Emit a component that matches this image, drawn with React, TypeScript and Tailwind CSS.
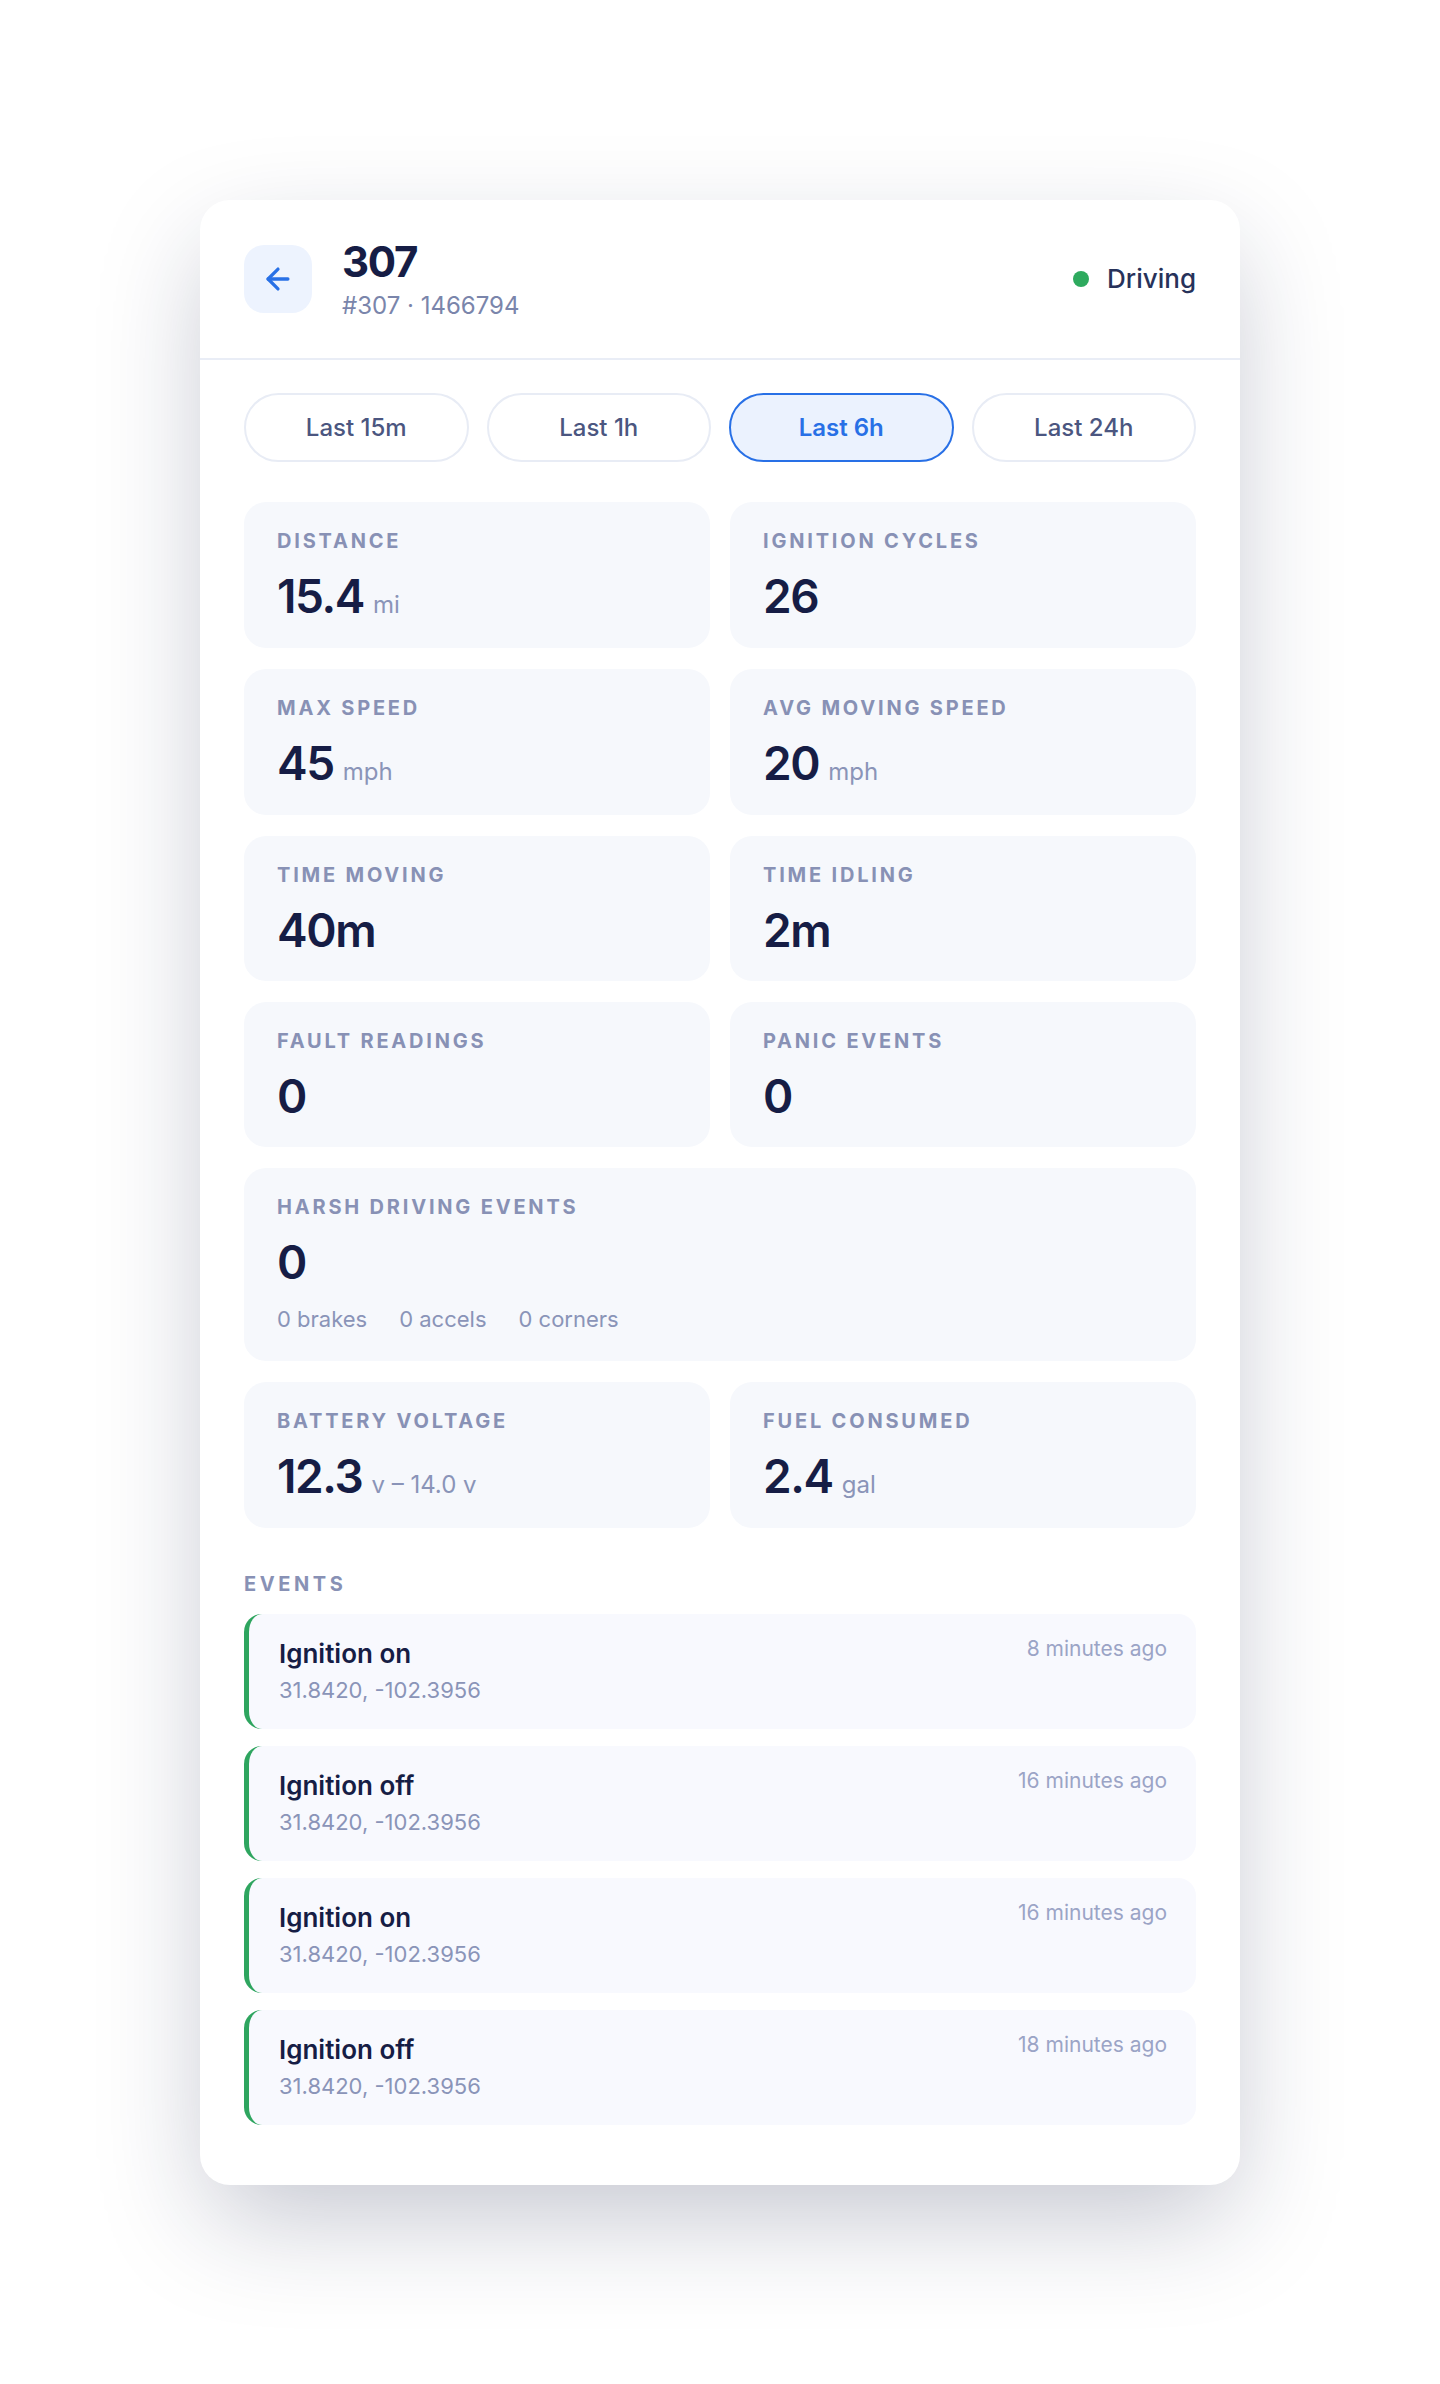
import { ArrowLeft } from "lucide-react";

type Stat = {
  label: string;
  value: string;
  unit?: string;
  wide?: boolean;
  extra?: string[];
};

const stats: Stat[] = [
  { label: "Distance", value: "15.4", unit: "mi" },
  { label: "Ignition cycles", value: "26" },
  { label: "Max speed", value: "45", unit: "mph" },
  { label: "Avg moving speed", value: "20", unit: "mph" },
  { label: "Time moving", value: "40m" },
  { label: "Time idling", value: "2m" },
  { label: "Fault readings", value: "0" },
  { label: "Panic events", value: "0" },
  { label: "Harsh driving events", value: "0", wide: true, extra: ["0 brakes", "0 accels", "0 corners"] },
  { label: "Battery voltage", value: "12.3", unit: "v – 14.0 v" },
  { label: "Fuel consumed", value: "2.4", unit: "gal" },
];

const events = [
  { title: "Ignition on", at: "8 minutes ago" },
  { title: "Ignition off", at: "16 minutes ago" },
  { title: "Ignition on", at: "16 minutes ago" },
  { title: "Ignition off", at: "18 minutes ago" },
];

const ranges = ["Last 15m", "Last 1h", "Last 6h", "Last 24h"];

const StatCard = ({ stat }: { stat: Stat }) => (
  <div
    className={`rounded-[22px] bg-[#f6f8fc] px-[33px] pt-[25px] ${
      stat.wide ? "col-span-2 pb-[27px]" : "pb-[28px]"
    }`}
  >
    <div className="text-[20px] leading-[28px] font-bold uppercase tracking-[0.14em] text-[#8891b5]">
      {stat.label}
    </div>
    <div className="mt-[18px] flex items-baseline">
      <span className="text-[46px] leading-[46px] font-semibold tracking-[-0.03em] text-[#161d45]">
        {stat.value}
      </span>
      {stat.unit && <span className="ml-[9px] text-[24px] leading-[30px] text-[#8a94b8]">{stat.unit}</span>}
    </div>
    {stat.extra && (
      <div className="mt-[19px] flex gap-8 text-[22px] leading-[30px] text-[#8a94b8]">
        {stat.extra.map((e) => (
          <span key={e}>{e}</span>
        ))}
      </div>
    )}
  </div>
);

const App = () => {
  return (
    <div className="min-h-screen bg-white py-[200px] font-['Inter','Noto_Sans',sans-serif]">
      <div className="mx-auto w-[1040px] rounded-[30px] bg-white pb-[60px] shadow-[0_40px_110px_-10px_rgba(25,30,70,0.26)]">
        {/* header */}
        <div className="flex h-[160px] items-center justify-between border-b-2 border-[#e9edf6] px-[44px]">
          <div className="flex items-center gap-[30px]">
            <button className="flex h-[68px] w-[68px] items-center justify-center rounded-[20px] bg-[#edf3fe] text-[#2870e6]">
              <ArrowLeft size={34} strokeWidth={2.3} />
            </button>
            <div>
              <div className="text-[42px] leading-[48px] font-bold tracking-[-0.03em] text-[#161d45]">307</div>
              <div className="mt-[5px] text-[24px] leading-[30px] text-[#7a85ab]">#307 · 1466794</div>
            </div>
          </div>
          <div className="flex items-center gap-[18px]">
            <span className="h-4 w-4 rounded-full bg-[#2eaa5e]" />
            <span className="text-[26px] leading-[32px] font-medium text-[#27325a]">Driving</span>
          </div>
        </div>

        <div className="px-[44px]">
          {/* range tabs */}
          <div className="mt-[33px] grid grid-cols-4 gap-[18px]">
            {ranges.map((r) => {
              const active = r === "Last 6h";
              return (
                <button
                  key={r}
                  className={`flex h-[69px] items-center justify-center rounded-full border-2 text-[24px] ${
                    active
                      ? "border-[#2870e6] bg-[#ebf2fe] font-semibold text-[#2870e6]"
                      : "border-[#e8ecf5] bg-white font-medium text-[#4b5680]"
                  }`}
                >
                  {r}
                </button>
              );
            })}
          </div>

          {/* stats */}
          <div className="mt-[40px] grid grid-cols-2 gap-x-5 gap-y-[21px]">
            {stats.map((s) => (
              <StatCard key={s.label} stat={s} />
            ))}
          </div>

          {/* events */}
          <div className="mt-[42px] text-[20px] leading-[28px] font-bold uppercase tracking-[0.18em] text-[#8891b5]">
            Events
          </div>
          <div className="mt-4 flex flex-col gap-[17px]">
            {events.map((ev, i) => (
              <div
                key={i}
                className="flex items-start justify-between rounded-[18px] border-l-[5px] border-[#2ea55f] bg-[#f8f9fe] pt-[24px] pr-[29px] pb-[25px] pl-[30px]"
              >
                <div>
                  <div className="text-[26px] leading-[32px] font-semibold text-[#161d45]">{ev.title}</div>
                  <div className="mt-[6px] text-[22px] leading-[28px] text-[#8a94b8]">31.8420, -102.3956</div>
                </div>
                <div className="-mt-[3px] text-[21px] leading-[28px] text-[#9ba4c6]">{ev.at}</div>
              </div>
            ))}
          </div>
        </div>
      </div>
    </div>
  );
};

export default App;
